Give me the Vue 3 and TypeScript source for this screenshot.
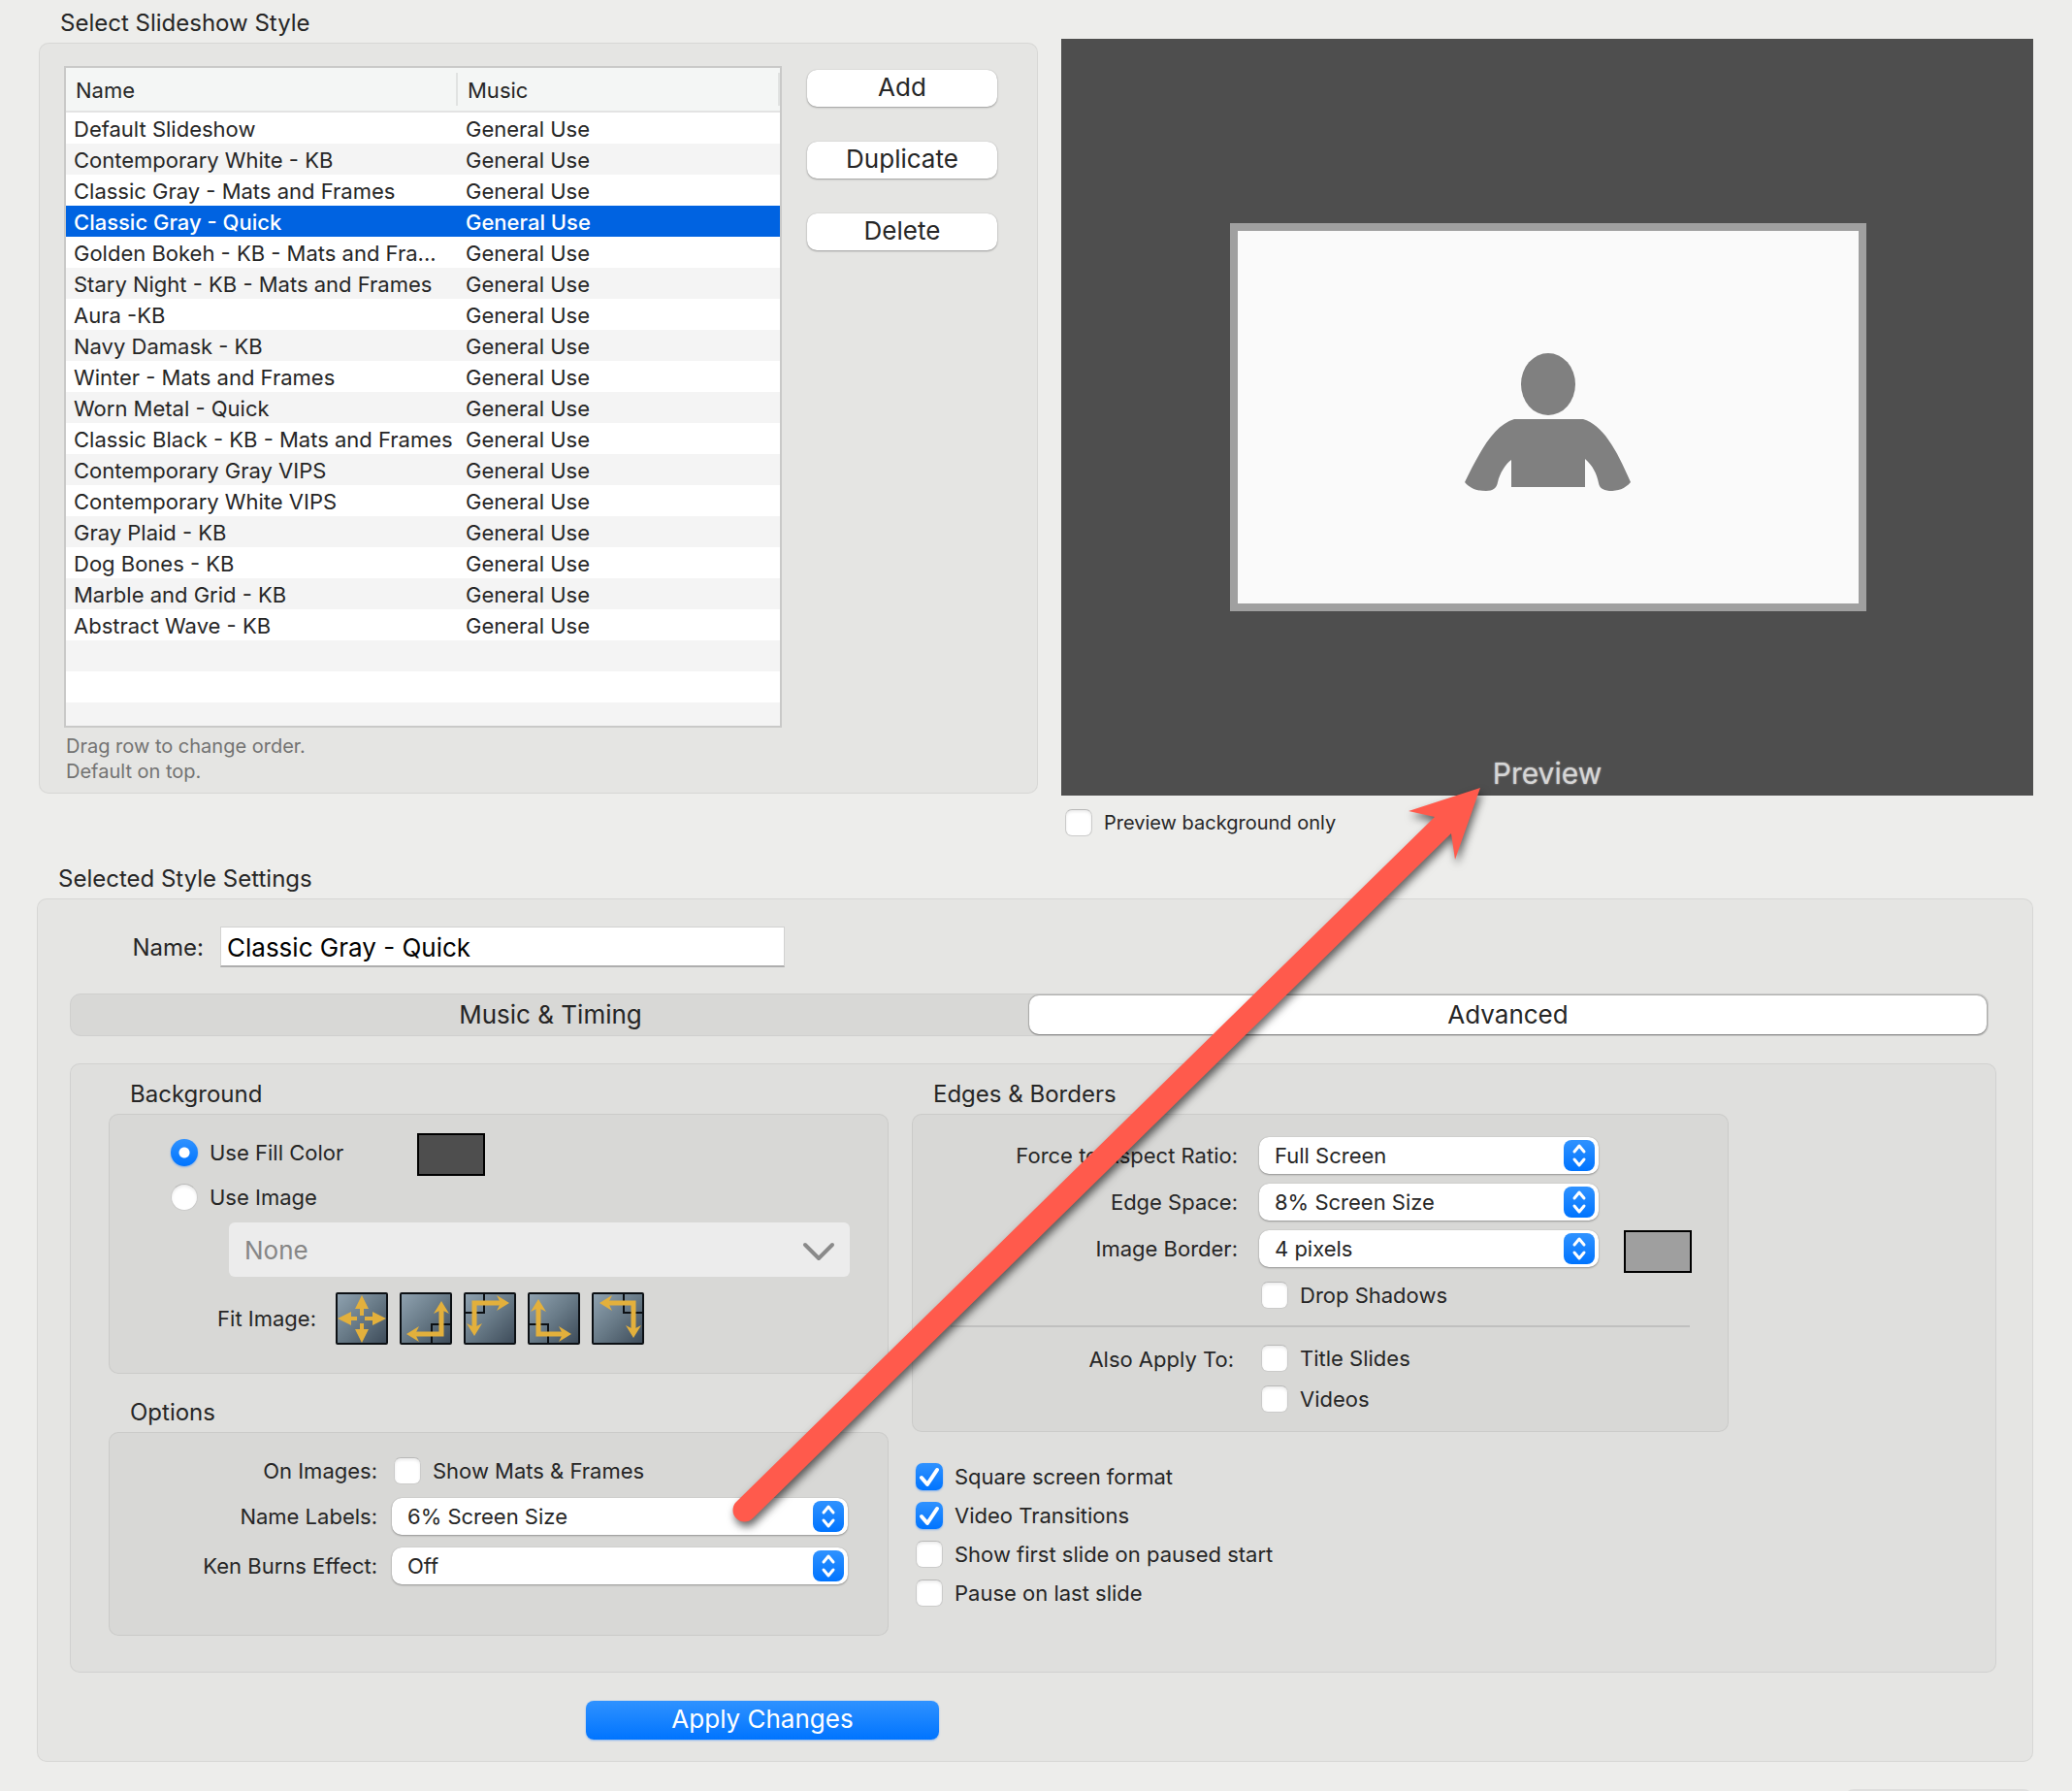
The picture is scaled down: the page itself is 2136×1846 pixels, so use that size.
<script setup lang="ts">
import { ref } from 'vue'

const styles = ref<string[]>([
  'Default Slideshow',
  'Contemporary White - KB',
  'Classic Gray - Mats and Frames',
  'Classic Gray - Quick',
  'Golden Bokeh - KB - Mats and Fra...',
  'Stary Night - KB - Mats and Frames',
  'Aura -KB',
  'Navy Damask - KB',
  'Winter - Mats and Frames',
  'Worn Metal - Quick',
  'Classic Black - KB - Mats and Frames',
  'Contemporary Gray VIPS',
  'Contemporary White VIPS',
  'Gray Plaid - KB',
  'Dog Bones - KB',
  'Marble and Grid - KB',
  'Abstract Wave - KB',
])
const selected = ref(3)
const styleName = ref('Classic Gray - Quick')
const tab = ref<'music' | 'advanced'>('advanced')

const previewBackgroundOnly = ref(false)
const backgroundMode = ref<'fill' | 'image'>('fill')
const fillColor = ref('#4e4e4e')
const borderColor = ref('#9f9f9f')
const showMats = ref(false)
const dropShadows = ref(false)

const applyTo = ref([
  { id: 'titles', label: 'Title Slides', on: false },
  { id: 'videos', label: 'Videos', on: false },
])
const playback = ref([
  { id: 'square', label: 'Square screen format', on: true },
  { id: 'transitions', label: 'Video Transitions', on: true },
  { id: 'paused', label: 'Show first slide on paused start', on: false },
  { id: 'last', label: 'Pause on last slide', on: false },
])

const edgeFields = [
  { id: 'aspect', label: 'Force to Aspect Ratio:', value: 'Full Screen' },
  { id: 'space', label: 'Edge Space:', value: '8% Screen Size' },
  { id: 'border', label: 'Image Border:', value: '4 pixels' },
]
const optionFields = [
  { id: 'labels', label: 'Name Labels:', value: '6% Screen Size' },
  { id: 'kenburns', label: 'Ken Burns Effect:', value: 'Off' },
]

interface FitIcon {
  name: string
  crop: string
  line: string
  heads: string[]
}
const fitIcons: FitIcon[] = [
  {
    name: 'Anchor bottom right',
    crop: 'M53 33H33V53',
    line: '43,17 43,43 15,43',
    heads: ['translate(43 9)', 'translate(7 43) rotate(-90)'],
  },
  {
    name: 'Anchor top left',
    crop: 'M1 21H21V1',
    line: '11,37 11,11 39,11',
    heads: ['translate(11 45) rotate(180)', 'translate(47 11) rotate(90)'],
  },
  {
    name: 'Anchor bottom left',
    crop: 'M1 33H21V53',
    line: '11,15 11,43 37,43',
    heads: ['translate(11 7)', 'translate(45 43) rotate(90)'],
  },
  {
    name: 'Anchor top right',
    crop: 'M53 21H33V1',
    line: '16,11 43,11 43,39',
    heads: ['translate(8 11) rotate(-90)', 'translate(43 47) rotate(180)'],
  },
]
</script>

<template>
  <main class="page">
    <section class="top">
      <div class="chooser">
        <h2 class="heading">Select Slideshow Style</h2>
        <div class="group chooser-box">
          <div class="list-col">
            <div class="list">
              <table>
                <thead>
                  <tr>
                    <th class="name-col"><span>Name</span></th>
                    <th><span>Music</span></th>
                  </tr>
                </thead>
                <tbody>
                  <tr
                    v-for="(s, i) in styles"
                    :key="s"
                    :class="{ selected: i === selected }"
                    @click="selected = i"
                  >
                    <td>{{ s }}</td>
                    <td>General Use</td>
                  </tr>
                  <tr v-for="n in 3" :key="'empty' + n">
                    <td></td>
                    <td></td>
                  </tr>
                </tbody>
              </table>
            </div>
            <p class="hint">Drag row to change order.<br />Default on top.</p>
          </div>
          <div class="actions">
            <button type="button" class="push">Add</button>
            <button type="button" class="push">Duplicate</button>
            <button type="button" class="push">Delete</button>
          </div>
        </div>
      </div>

      <div class="preview-col">
        <div class="preview">
          <div class="slide">
            <svg class="person" viewBox="0 0 172 144" aria-hidden="true">
              <ellipse cx="86" cy="32" rx="28" ry="32" />
              <path
                d="M51 68H122C142 74 156 98 171 133C165 140 158 142 149 142C142 141 139 139 138 134C136 124 132 116 124 109V138H48V110C42 114 36 124 34 133C33 139 29 142 22 142C13 142 6 140 0 133C17 98 31 74 51 68Z"
              />
            </svg>
          </div>
          <div class="caption">Preview</div>
        </div>
        <label class="check small preview-check">
          <span class="box">
            <input v-model="previewBackgroundOnly" type="checkbox" />
            <svg viewBox="0 0 28 28" aria-hidden="true"><path d="M6 15L12 22L22 7" /></svg>
          </span>
          Preview background only
        </label>
      </div>
    </section>

    <h2 class="heading settings-heading">Selected Style Settings</h2>
    <section class="group settings">
      <div class="name-row">
        <label for="style-name">Name:</label>
        <input id="style-name" v-model="styleName" type="text" />
      </div>

      <div class="tabs" role="tablist">
        <button type="button" role="tab" :class="{ on: tab === 'music' }" @click="tab = 'music'">
          Music &amp; Timing
        </button>
        <button type="button" role="tab" :class="{ on: tab === 'advanced' }" @click="tab = 'advanced'">
          Advanced
        </button>
      </div>

      <div class="group panel">
        <div class="left">
          <h3 class="heading">Background</h3>
          <div class="group background-box">
            <div class="fill-row">
              <label class="check">
                <span class="box round">
                  <input v-model="backgroundMode" type="radio" name="background" value="fill" />
                </span>
                Use Fill Color
              </label>
              <input v-model="fillColor" class="swatch" type="color" aria-label="Fill color" />
            </div>
            <label class="check image-row">
              <span class="box round">
                <input v-model="backgroundMode" type="radio" name="background" value="image" />
              </span>
              Use Image
            </label>
            <div class="image-select">
              <select aria-label="Background image" disabled>
                <option>None</option>
              </select>
              <svg viewBox="0 0 34 20" aria-hidden="true"><path d="M3 3L17 17L31 3" /></svg>
            </div>
            <div class="fit-row">
              <span class="fit-label">Fit Image:</span>
              <svg class="defs" width="0" height="0" aria-hidden="true">
                <defs>
                  <linearGradient id="tile" x1="0" y1="0" x2="1" y2="1">
                    <stop offset="0" stop-color="#90a3b1" />
                    <stop offset="0.5" stop-color="#687a87" />
                    <stop offset="1" stop-color="#3c4a58" />
                  </linearGradient>
                </defs>
              </svg>
              <button type="button" class="fit" aria-label="Fill">
                <svg viewBox="0 0 54 54">
                  <rect x="1" y="1" width="52" height="52" rx="1" fill="url(#tile)" stroke="#0c1014" stroke-width="2" />
                  <g fill="#e3b03c">
                    <path d="M27 3L34 17H29V24H25V17H20Z" />
                    <path d="M27 52L34 38H29V32H25V38H20Z" />
                    <path d="M2 27L16 20V25H22V29H16V34Z" />
                    <path d="M52 27L38 20V25H30V29H38V34Z" />
                  </g>
                </svg>
              </button>
              <button v-for="f in fitIcons" :key="f.name" type="button" class="fit" :aria-label="f.name">
                <svg viewBox="0 0 54 54">
                  <rect x="1" y="1" width="52" height="52" rx="1" fill="url(#tile)" stroke="#0c1014" stroke-width="2" />
                  <path :d="f.crop" fill="none" stroke="#0c1014" stroke-width="2" />
                  <polyline :points="f.line" fill="none" stroke="#e3b03c" stroke-width="5" />
                  <path
                    v-for="h in f.heads"
                    :key="h"
                    d="M0 0L8 13L2 10H-2L-8 13Z"
                    fill="#e3b03c"
                    :transform="h"
                  />
                </svg>
              </button>
            </div>
          </div>

          <h3 class="heading options-heading">Options</h3>
          <div class="group options-box">
            <div class="field">
              <span class="field-label">On Images:</span>
              <label class="check">
                <span class="box">
                  <input v-model="showMats" type="checkbox" />
                  <svg viewBox="0 0 28 28" aria-hidden="true"><path d="M6 15L12 22L22 7" /></svg>
                </span>
                Show Mats &amp; Frames
              </label>
            </div>
            <div v-for="f in optionFields" :key="f.id" class="field">
              <label class="field-label" :for="f.id">{{ f.label }}</label>
              <div class="popup">
                <select :id="f.id">
                  <option>{{ f.value }}</option>
                </select>
                <svg viewBox="0 0 32 32" aria-hidden="true"><path d="M11 12L16 6L21 12M11 20L16 26L21 20" /></svg>
              </div>
            </div>
          </div>
        </div>

        <div class="right">
          <h3 class="heading">Edges &amp; Borders</h3>
          <div class="group edges-box">
            <div v-for="f in edgeFields" :key="f.id" class="field">
              <label class="field-label" :for="f.id">{{ f.label }}</label>
              <div class="popup">
                <select :id="f.id">
                  <option>{{ f.value }}</option>
                </select>
                <svg viewBox="0 0 32 32" aria-hidden="true"><path d="M11 12L16 6L21 12M11 20L16 26L21 20" /></svg>
              </div>
              <input
                v-if="f.id === 'border'"
                v-model="borderColor"
                class="swatch"
                type="color"
                aria-label="Border color"
              />
            </div>
            <div class="field">
              <span class="field-label"></span>
              <label class="check">
                <span class="box">
                  <input v-model="dropShadows" type="checkbox" />
                  <svg viewBox="0 0 28 28" aria-hidden="true"><path d="M6 15L12 22L22 7" /></svg>
                </span>
                Drop Shadows
              </label>
            </div>
            <hr />
            <div class="apply-to">
              <span class="apply-label">Also Apply To:</span>
              <div class="stack">
                <label v-for="c in applyTo" :key="c.id" class="check">
                  <span class="box">
                    <input v-model="c.on" type="checkbox" />
                    <svg viewBox="0 0 28 28" aria-hidden="true"><path d="M6 15L12 22L22 7" /></svg>
                  </span>
                  {{ c.label }}
                </label>
              </div>
            </div>
          </div>

          <div class="playback">
            <label v-for="c in playback" :key="c.id" class="check">
              <span class="box">
                <input v-model="c.on" type="checkbox" />
                <svg viewBox="0 0 28 28" aria-hidden="true"><path d="M6 15L12 22L22 7" /></svg>
              </span>
              {{ c.label }}
            </label>
          </div>
        </div>
      </div>

      <button type="button" class="apply">Apply Changes</button>
    </section>

    <footer class="footer"><div class="footer-edge"></div></footer>

    <svg class="arrow" viewBox="0 0 2136 1846" aria-hidden="true">
      <path
        d="M1526 812L1500 886L1496 859L776 1565A12 12 0 0 1 759 1548L1479 842L1452 836Z"
      />
    </svg>
  </main>
</template>

<style>
body {
  margin: 0;
  background: #ededeb;
}
</style>

<style scoped>
.page,
.page * {
  box-sizing: border-box;
}
.page {
  position: relative;
  padding: 9px 40px 0 38px;
  overflow: hidden;
  background: #ededeb;
  color: #262626;
  font-family: Inter, "Liberation Sans", sans-serif;
  font-size: 22px;
  line-height: 30px;
}
button,
input,
select {
  margin: 0;
  font-family: inherit;
  color: inherit;
}
.heading {
  margin: 0 0 5px 22px;
  font-size: 24px;
  line-height: 30px;
  font-weight: 400;
}
.group {
  border: 1px solid rgba(0, 0, 0, 0.06);
  border-radius: 10px;
  background: #e5e5e3;
}

/* style chooser and preview */
.top {
  display: flex;
  align-items: flex-start;
  gap: 24px;
  padding-left: 2px;
}
.chooser {
  flex: 1030 1 0;
  min-width: 0;
}
.chooser-box {
  display: flex;
  align-items: flex-start;
  gap: 26px;
  padding: 23px 41px 9px 25px;
}
.list-col {
  flex: 1;
  min-width: 0;
}
.list {
  height: 682px;
  overflow: hidden;
  border: 2px solid #c9c9c8;
  background: #fff;
}
table {
  width: 100%;
  table-layout: fixed;
  border-collapse: separate;
  border-spacing: 0;
}
th {
  height: 46px;
  padding: 0;
  border-bottom: 2px solid #e3e3e3;
  background: #f4f6f5;
  font-weight: 400;
  text-align: left;
}
th span {
  display: block;
  padding: 3px 0 1px 10px;
  border-right: 2px solid #e1e3e2;
}
.name-col {
  width: 404px;
}
td {
  height: 32px;
  padding: 2px 0 0 8px;
  line-height: 30px;
  white-space: nowrap;
  overflow: hidden;
}
tbody tr:nth-child(even) {
  background: #f4f4f4;
}
tbody tr.selected {
  background: #0063e1;
  color: #fff;
  font-weight: 500;
}
.hint {
  margin: 6px 0 0 2px;
  font-size: 20px;
  line-height: 26px;
  color: #737372;
}
.actions {
  display: flex;
  flex-direction: column;
  gap: 36px;
  width: 196px;
  padding-top: 4px;
}
.push {
  height: 38px;
  padding: 0 0 2px;
  border: 0;
  border-radius: 10px;
  background: #fff;
  box-shadow: 0 0 1px rgba(0, 0, 0, 0.25), 0 1px 2px rgba(0, 0, 0, 0.3);
  font-size: 26px;
  line-height: 34px;
}
.preview-col {
  flex: 1002 1 0;
  min-width: 0;
  padding-top: 31px;
}
.preview {
  position: relative;
  display: flex;
  align-items: center;
  justify-content: center;
  height: 780px;
  padding-left: 2px;
  background: #4e4e4e;
}
.slide {
  display: flex;
  align-items: center;
  justify-content: center;
  width: 656px;
  height: 400px;
  border: 8px solid #a0a0a0;
  background: #fafafa;
}
.person {
  width: 172px;
  height: 144px;
  margin-top: 12px;
  fill: #808080;
}
.caption {
  position: absolute;
  right: 0;
  bottom: 4px;
  left: 0;
  font-size: 30px;
  line-height: 38px;
  text-align: center;
  color: #d6d6d6;
  text-shadow: 0 0 2px rgba(255, 255, 255, 0.6);
}
.preview-check {
  margin: 14px 0 0 4px;
}

/* check boxes and radios */
.check {
  display: flex;
  align-items: center;
  gap: 12px;
  height: 28px;
  white-space: nowrap;
}
.check.small {
  font-size: 20px;
}
.box {
  display: grid;
  flex: none;
  width: 28px;
  height: 28px;
}
.box input,
.box svg {
  grid-area: 1 / 1;
}
.box input {
  appearance: none;
  width: 28px;
  height: 28px;
  border: 1px solid #cbcbca;
  border-top-color: #b9b9b8;
  border-radius: 7px;
  background: #fff;
  box-shadow: inset 0 2px 3px rgba(0, 0, 0, 0.08);
}
.box input:checked {
  border: 0;
  background: linear-gradient(#2f92ff, #0074ff);
  box-shadow: 0 1px 2px rgba(0, 110, 255, 0.4);
}
.box svg {
  position: relative;
  width: 28px;
  height: 28px;
  fill: none;
  stroke: #fff;
  stroke-width: 4;
  stroke-linecap: round;
  stroke-linejoin: round;
  pointer-events: none;
  visibility: hidden;
}
.box input:checked + svg {
  visibility: visible;
}
.box.round input {
  border-radius: 50%;
}
.box.round input:checked {
  background: radial-gradient(circle, #fff 5px, transparent 6px), linear-gradient(#2f92ff, #0074ff);
}

/* settings */
.settings-heading {
  margin-top: 29px;
}
.settings {
  padding: 28px 37px 22px 33px;
}
.name-row {
  display: flex;
  align-items: center;
  gap: 17px;
}
.name-row label {
  width: 138px;
  padding-top: 2px;
  font-size: 24px;
  text-align: right;
}
.name-row input {
  width: 582px;
  height: 42px;
  padding: 2px 6px 0;
  border: 1px solid #d2d2d1;
  border-bottom: 2px solid #aeaeae;
  background: #fff;
  color: #000;
  font-size: 26px;
}
.tabs {
  display: flex;
  height: 44px;
  margin: 27px 8px 28px 0;
  padding: 1px;
  border: 1px solid #cfcfce;
  border-radius: 11px;
  background: #d8d8d6;
}
.tabs button {
  flex: 1;
  padding: 0;
  border: 0;
  border-radius: 10px;
  background: transparent;
  font-size: 26px;
  line-height: 34px;
}
.tabs .on {
  background: #fff;
  box-shadow: 0 0 1px 1px rgba(0, 0, 0, 0.2), 0 1px 1px rgba(0, 0, 0, 0.25);
}
.panel {
  display: grid;
  grid-template-columns: 804fr 842fr 251fr;
  gap: 24px;
  padding: 16px 0 37px 39px;
  background: #dfdfdd;
}
.panel .group {
  background: #d8d8d6;
}
.background-box {
  padding: 19px 39px 29px 63px;
}
.fill-row {
  display: flex;
  align-items: flex-start;
  height: 44px;
}
.fill-row .check {
  width: 254px;
  height: 40px;
}
.image-row {
  height: 40px;
  margin: 2px 0 6px;
}
.swatch {
  flex: none;
  width: 70px;
  height: 44px;
  padding: 0;
  border: 2px solid #000;
  border-radius: 0;
  appearance: none;
}
.swatch::-webkit-color-swatch-wrapper {
  padding: 0;
}
.swatch::-webkit-color-swatch {
  border: 0;
  border-radius: 0;
}
.image-select {
  position: relative;
  margin-left: 60px;
}
.image-select select {
  display: block;
  width: 100%;
  height: 56px;
  padding: 0 16px;
  border: 0;
  border-radius: 6px;
  background: #ececec;
  color: #868686;
  font-size: 26px;
  opacity: 1;
  appearance: none;
}
.image-select svg {
  position: absolute;
  top: 20px;
  right: 15px;
  width: 34px;
  height: 20px;
  fill: none;
  stroke: #8a8a8a;
  stroke-width: 4;
  stroke-linecap: round;
  stroke-linejoin: round;
  pointer-events: none;
}
.fit-row {
  display: flex;
  align-items: center;
  gap: 12px;
  margin-top: 16px;
}
.fit-label {
  width: 150px;
  margin-right: 8px;
  text-align: right;
}
.defs {
  position: absolute;
}
.fit {
  width: 54px;
  height: 54px;
  padding: 0;
  border: 0;
  background: none;
}
.fit svg {
  display: block;
  width: 54px;
  height: 54px;
}
.options-heading {
  margin-top: 25px;
}
.field {
  display: flex;
  align-items: center;
}
.field-label {
  flex: none;
  text-align: right;
  white-space: nowrap;
}
.field .check {
  margin-left: 2px;
}
.popup {
  position: relative;
  flex: 1;
}
.popup select {
  display: block;
  width: 100%;
  height: 38px;
  padding: 0 16px;
  border: 0;
  border-radius: 10px;
  background: #fff;
  box-shadow: 0 0 1px rgba(0, 0, 0, 0.25), 0 1px 2px rgba(0, 0, 0, 0.3);
  font-size: 22px;
  appearance: none;
}
.popup svg {
  position: absolute;
  top: 3px;
  right: 4px;
  width: 32px;
  height: 32px;
  border-radius: 8px;
  background: linear-gradient(#2f92ff, #0074ff);
  fill: none;
  stroke: #fff;
  stroke-width: 3;
  stroke-linecap: round;
  stroke-linejoin: round;
  pointer-events: none;
}
.options-box {
  display: flex;
  flex-direction: column;
  gap: 13px;
  height: 210px;
  padding: 24px 41px 0 0;
}
.options-box .field-label {
  width: 276px;
  margin-right: 15px;
}
.edges-box {
  padding: 23px 0 19px;
}
.edges-box .field {
  height: 38px;
  margin-bottom: 10px;
}
.edges-box .field-label {
  width: 335px;
  margin-right: 22px;
}
.edges-box .popup {
  flex: none;
  width: 350px;
}
.edges-box .swatch {
  align-self: flex-start;
  margin-left: 26px;
}
.edges-box hr {
  height: 2px;
  margin: 12px 39px 18px;
  border: 0;
  background: #c0c0bf;
}
.apply-to {
  display: flex;
  align-items: flex-start;
}
.apply-label {
  width: 331px;
  margin-right: 28px;
  text-align: right;
}
.stack {
  display: flex;
  flex-direction: column;
  gap: 14px;
}
.playback {
  display: flex;
  flex-direction: column;
  gap: 12px;
  margin: 32px 0 0 4px;
}
.apply {
  display: block;
  width: 364px;
  height: 40px;
  margin: 29px 0 0 532px;
  padding: 0 0 2px;
  border: 0;
  border-radius: 8px;
  background: linear-gradient(#2f92ff, #0074ff);
  box-shadow: 0 1px 2px rgba(0, 110, 255, 0.4);
  color: #fff;
  font-size: 26px;
  line-height: 34px;
}

/* top edge of the button bar below the settings */
.footer {
  height: 30px;
  padding-top: 28px;
  overflow: hidden;
}
.footer-edge {
  width: 195px;
  height: 38px;
  margin-left: auto;
  border-radius: 10px;
  background: #dededd;
}
.arrow {
  position: absolute;
  top: 0;
  left: 0;
  width: 100%;
  fill: #ff5a4c;
  filter: drop-shadow(2px 5px 4px rgba(0, 0, 0, 0.6));
  pointer-events: none;
}
</style>
